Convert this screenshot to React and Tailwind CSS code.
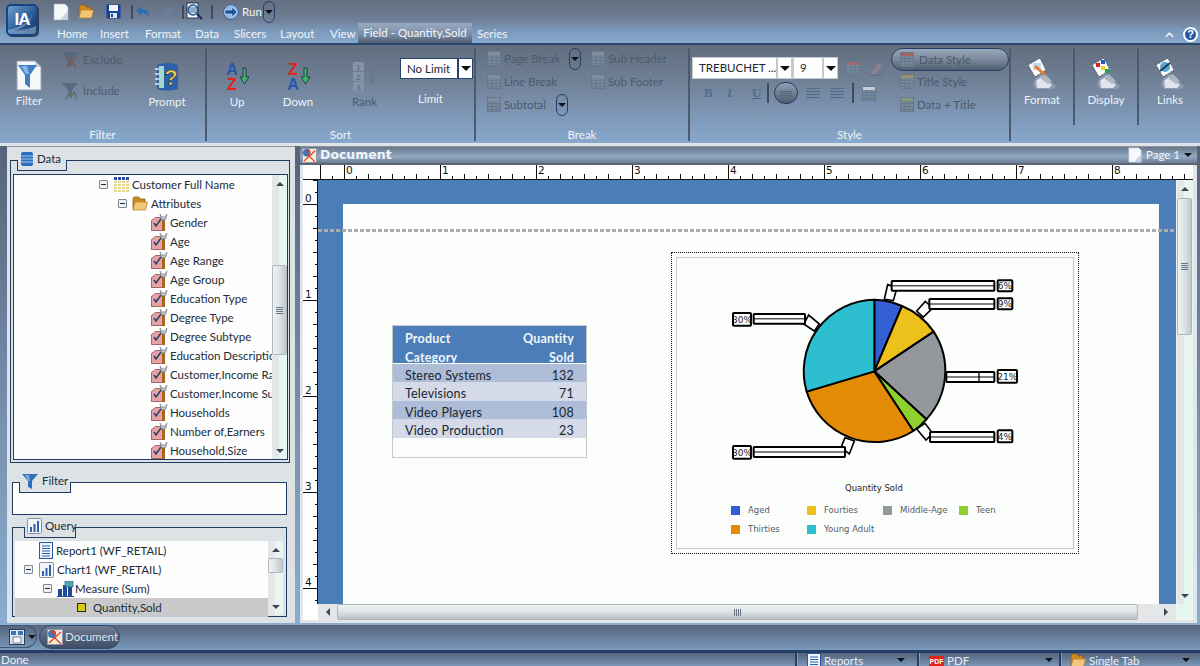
import React from "react";

// ---------- small icons ----------
const PageIcon = ({ className = "" }) => (
  <svg viewBox="0 0 16 18" className={`w-[16px] h-[18px] shrink-0 ${className}`}>
    <path d="M1 1h11l3 3v13H1z" fill="#f6f8fb" stroke="#a4afbd" strokeWidth="0.6" />
    <path d="M7 17l8-9v9z" fill="#c3d1e4" />
  </svg>
);

const FolderIcon = ({ w = 16, h = 15 }) => (
  <svg viewBox="0 0 16 15" width={w} height={h} className="shrink-0">
    <path d="M1 3l1-2h5l1 2h5v10H1z" fill="#d08a22" stroke="#8a5510" strokeWidth="0.7" />
    <path d="M1 14l2-8h12.500l-2 8z" fill="#f4c678" stroke="#b27a22" strokeWidth="0.7" />
  </svg>
);

const SaveIcon = () => (
  <svg viewBox="0 0 15 15" className="w-[15px] h-[15px] shrink-0">
    <rect x="0.500" y="0.500" width="14" height="14" rx="1" fill="#14439a" />
    <rect x="3" y="1" width="9" height="6" fill="#f4f6fa" />
    <rect x="4" y="9" width="7" height="5" fill="#dfe6f0" />
    <rect x="5" y="10" width="2" height="3" fill="#14439a" />
  </svg>
);

const UndoIcon = ({ flip, color = "#2c6eb3" }) => (
  <svg viewBox="0 0 14 12" className={`w-[14px] h-[12px] shrink-0 ${flip ? "-scale-x-100" : ""}`}>
    <path d="M5 0v3c5 0 8 2 8 8-2-3-4-4-8-4v3L0 5z" fill={color} />
  </svg>
);

const PreviewIcon = () => (
  <svg viewBox="0 0 17 19" className="w-[17px] h-[19px] shrink-0">
    <rect x="1" y="1" width="11" height="15" fill="#fff" stroke="#26364d" />
    <circle cx="7" cy="8" r="5" fill="#d5ecf5" stroke="#1d4f8c" strokeWidth="1.400" />
    <path d="M3 6h8M3 8h8M3 10h8" stroke="#244c80" strokeWidth="0.800" />
    <path d="M11 12l5 5" stroke="#1f2d63" strokeWidth="2.200" />
  </svg>
);

const RunIcon = () => (
  <svg viewBox="0 0 16 16" className="w-[16px] h-[16px] shrink-0">
    <circle cx="8" cy="8" r="7.500" fill="#8eb6e3" stroke="#42628d" />
    <path d="M2 6h7V3l5 5-5 5v-3H2z" fill="#1d4f9c" stroke="#d7e5f5" strokeWidth="0.600" />
  </svg>
);

const Caret = ({ className = "" }) => (
  <span className={`block w-0 h-0 border-x-[4px] border-x-transparent border-t-[4px] border-t-[#0d1015] ${className}`} />
);

const BigCaret = () => (
  <span className="block w-0 h-0 border-x-[5px] border-x-transparent border-t-[5px] border-t-[#0d1015]" />
);

const FunnelPageIcon = () => (
  <svg viewBox="0 0 26 31" className="w-[26px] h-[31px]">
    <path d="M1 1h18l6 6v23H1z" fill="#f5f7f9" stroke="#9aa6b5" />
    <path d="M19 1v6h6z" fill="#c9d2dc" />
    <path d="M2 5h19l-7 10v13l-5-4V15z" fill="#3f7ec4" />
    <path d="M5 6h6l2 8h-3z" fill="#8ab6e6" />
  </svg>
);

const FunnelSmall = () => (
  <svg viewBox="0 0 17 17" className="w-[17px] h-[17px] shrink-0">
    <path d="M0 1h16l-6 7v8l-4-2V8z" fill="#2f70b8" />
    <path d="M3 2h4l1 6H6z" fill="#79a9dd" />
  </svg>
);

const ExcludeIcon = ({ include }) => (
  <svg viewBox="0 0 20 18" className="w-[20px] h-[18px] shrink-0">
    <path d="M2 1h16l-6 7v8l-4-2V8z" fill="#566a80" />
    {include ? (
      <path d="M5 17l4-5 2 3 3-5 3 7" stroke="#5c7565" strokeWidth="1.500" fill="none" />
    ) : (
      <path d="M5 5l11 11M16 6L6 16" stroke="#7a5a64" strokeWidth="2" fill="none" />
    )}
  </svg>
);

const PromptIcon = () => (
  <svg viewBox="0 0 26 30" className="w-[26px] h-[30px]">
    <path d="M3 3q10-4 21 0v24q-10 3-21 0z" fill="#2d60aa" />
    <rect x="5" y="4" width="5" height="22" fill="#a5d6cc" />
    <path d="M1 7h4M1 12h4M1 17h4M1 22h4" stroke="#dfe7ef" strokeWidth="1.300" />
    <text x="17" y="23" textAnchor="middle" fontSize="22" fontWeight="700" fontFamily="Liberation Sans" fill="#efd547" stroke="#20304a" strokeWidth="0.600">?</text>
  </svg>
);

const SortIcon = ({ top, bottom, topColor, bottomColor }) => (
  <svg viewBox="0 0 28 33" className="w-[28px] h-[33px]">
    <text x="9" y="14" textAnchor="middle" fontSize="16" fontWeight="700" fontFamily="Liberation Sans" fill={topColor}>{top}</text>
    <text x="9" y="29" textAnchor="middle" fontSize="16" fontWeight="700" fontFamily="Liberation Sans" fill={bottomColor}>{bottom}</text>
    <path d="M20 7h3v9h3l-4.500 7-4.500-7h3z" fill="#3fb56b" stroke="#15293c" strokeWidth="0.800" />
  </svg>
);

const RankIcon = () => (
  <svg viewBox="0 0 26 31" className="w-[26px] h-[31px]">
    {["1", "2", "3"].map((n, i) => (
      <g key={n}>
        <rect x="1" y={1 + i * 10} width="11" height="9" fill="#8494a6" />
        <text x="6.500" y={8.500 + i * 10} textAnchor="middle" fontSize="8" fontFamily="Liberation Sans" fill="#566476">{n}</text>
      </g>
    ))}
    <path d="M18 8h3v8h3l-4.500 7-4.500-7h3z" fill="#67788b" />
  </svg>
);

const SmallTableIcon = ({ head = "#7f8ea0", line = "#66788c" }) => (
  <svg viewBox="0 0 14 15" className="w-[14px] h-[15px] shrink-0">
    <rect x="0.500" y="0.500" width="13" height="14" fill="#77889b" stroke={line} />
    <rect x="1" y="1" width="12" height="3" fill={head} />
    <path d="M1 6.500h12M1 9.500h12M1 12.500h12M5 4v10M9 4v10" stroke={line} />
  </svg>
);

// tilted card over a curled grey sheet
const CardIcon = ({ children }) => (
  <svg viewBox="0 0 32 34" className="w-[32px] h-[34px]">
    <path d="M9 22l7-6 14 13-3 3H10l-3-4z" fill="#8d9cae" />
    <path d="M10 24l6-5 10 9-3 3H11z" fill="#dfe5ec" />
    <path d="M14 21l5-4 7 7-4 3z" fill="#aab6c3" />
    <path d="M2 8l12-7 6 12-11 7z" fill="#f8fafc" stroke="#26364d" strokeWidth="0.700" strokeDasharray="2 1" />
    {children}
  </svg>
);

const FieldIcon = () => (
  <svg viewBox="0 0 17 17" className="w-[17px] h-[17px] shrink-0">
    <path d="M0.500 6.500l4-3h9v10l-3 3H0.500z" fill="#e6a2a6" stroke="#8d4c50" strokeWidth="0.800" />
    <path d="M3 9l2 3 5-7" stroke="#27405f" strokeWidth="1.500" fill="none" />
    <rect x="11" y="6" width="3" height="11" fill="#a9651f" />
    <path d="M9 0l1 5 2 1h2l1-1 1-5-2 3h-3z" fill="#bfc4ca" stroke="#56606b" strokeWidth="0.500" />
  </svg>
);

const GridIcon = () => (
  <svg viewBox="0 0 16 16" className="w-[16px] h-[16px] shrink-0">
    {[0, 4, 8, 12].map((x) => <rect key={x} x={x} y="0" width="3" height="3" fill="#2a4f9e" />)}
    {[4, 7, 10, 13].map((y) =>
      [0, 4, 8, 12].map((x) => <rect key={`${x}-${y}`} x={x} y={y} width="3" height="2" fill="#e5d690" />)
    )}
  </svg>
);

const MinusBox = () => (
  <span className="flex w-[9px] h-[9px] shrink-0 items-center justify-center border border-[#7d8794] bg-[#eef1f4] rounded-[1px]">
    <span className="block w-[5px] h-px bg-[#1c2a3a]" />
  </span>
);

const DocIcon = () => (
  <svg viewBox="0 0 14 17" className="w-[14px] h-[17px] shrink-0">
    <rect x="0.500" y="0.500" width="13" height="16" fill="#eef3fa" stroke="#29569e" />
    <path d="M3 4h8M3 6.500h8M3 9h8M3 11.500h8M3 14h8" stroke="#2a62b0" />
  </svg>
);

const ChartIcon = () => (
  <svg viewBox="0 0 15 16" className="w-[15px] h-[16px] shrink-0">
    <rect x="0.500" y="0.500" width="14" height="15" rx="1" fill="#f2f4f7" stroke="#8793a3" />
    <rect x="3" y="9" width="2" height="5" fill="#2f62ad" />
    <rect x="6.500" y="6" width="2" height="8" fill="#2f62ad" />
    <rect x="10" y="3" width="2" height="11" fill="#2f62ad" />
  </svg>
);

const MeasureIcon = () => (
  <svg viewBox="0 0 17 16" className="w-[17px] h-[16px] shrink-0">
    <rect x="1" y="8" width="4" height="7" fill="#1f4b96" />
    <rect x="6" y="4" width="4" height="11" fill="#1f4b96" />
    <rect x="11" y="6" width="4" height="9" fill="#1f4b96" />
    <rect x="8" y="0" width="8" height="6" fill="#4fa8a5" stroke="#1f4b96" strokeWidth="0.600" />
    <path d="M0 15.500h17" stroke="#1f4b96" />
  </svg>
);

const DocTabIcon = ({ size = 16 }) => (
  <svg viewBox="0 0 16 16" width={size} height={size} className="shrink-0">
    <rect x="0.500" y="0.500" width="15" height="15" fill="#f7ecd4" stroke="#8a98aa" />
    <circle cx="5" cy="5" r="4" fill="#3b77bb" />
    <path d="M5 1a4 4 0 0 1 4 4H5z" fill="#dd3b2e" />
    <path d="M2 14L14 3M6 7l8 8" stroke="#d83c2c" strokeWidth="1.300" />
  </svg>
);

// ---------- shared bits ----------
const ScrollV = ({ top, thumb, bottom }) => (
  <div className="flex flex-col w-[15px] h-full shrink-0 bg-[linear-gradient(90deg,#e4e6e8_50%,#e8f6f2_50%)]">
    <div className="flex h-[17px] shrink-0 items-center justify-center">
      <span className="block w-0 h-0 border-x-[4px] border-x-transparent border-b-[4px] border-b-[#3c4652]" />
    </div>
    <div style={{ height: top }} className="shrink-0" />
    <div style={{ height: thumb }} className="flex shrink-0 items-center justify-center rounded-[2px] border border-[#aeb6be] bg-[linear-gradient(90deg,#eef4f3,#dfe4e6_45%,#c2c7d0)]">
      {thumb > 30 && (
        <span className="flex flex-col gap-px w-[7px]">
          <span className="h-px bg-[#6a7480]" />
          <span className="h-px bg-[#6a7480]" />
          <span className="h-px bg-[#6a7480]" />
          <span className="h-px bg-[#6a7480]" />
        </span>
      )}
    </div>
    <div className="flex-1" />
    <div style={{ height: bottom }} className="flex shrink-0 items-center justify-center">
      <span className="block w-0 h-0 border-x-[4px] border-x-transparent border-t-[4px] border-t-[#3c4652]" />
    </div>
  </div>
);

// the tab sits over the fieldset's top line, only its lower part has a border
const Legend = ({ icon, text, className }) => (
  <div className={`relative flex items-start gap-[3px] bg-[#dde2e5] pl-[3px] ${className}`}>
    <span className="absolute inset-x-0 bottom-0 h-[11px] border-x border-b border-[#1f3b63]" />
    <span className="relative">{icon}</span>
    <span className="relative text-[11.500px] leading-[16px] text-[#1c2a3a]">{text}</span>
  </div>
);

const TreeRow = ({ indent, minus, icon, text, selected, gap = "gap-[3px]" }) => (
  <div className={`flex items-center h-[19px] shrink-0 ${gap} ${selected ? "bg-[#c9c9c9]" : ""} ${indent}`}>
    {minus && <MinusBox />}
    {icon}
    <span className="text-[11.500px] whitespace-nowrap text-[#1c2a3a]">{text}</span>
  </div>
);

const ribbonTextOn = "text-[11.500px] text-[#eef3f8] leading-[16px] whitespace-nowrap";
const ribbonTextOff = "text-[11.500px] text-[#4c5a6c] leading-[16px] whitespace-nowrap";

const BigBtn = ({ icon, label, className = "", off, pt = "pt-[14px]", labelH = "h-[42px]" }) => (
  <div className={`flex flex-col items-center shrink-0 ${pt} ${className}`}>
    <div className={`flex items-start justify-center ${labelH}`}>{icon}</div>
    <span className={off ? ribbonTextOff : ribbonTextOn}>{label}</span>
  </div>
);

const SmallBtn = ({ icon, label, w = "" }) => (
  <div className={`flex items-center gap-[3px] h-[23px] ${w}`}>
    {icon}
    <span className={ribbonTextOff}>{label}</span>
  </div>
);

const PillCaret = ({ className = "" }) => (
  <span className={`flex w-[12px] h-[22px] items-center justify-center rounded-full border border-[#233f68] ${className}`}>
    <Caret />
  </span>
);

const GroupLabel = ({ children }) => (
  <div className="h-[14px] text-center text-[11.500px] leading-[15px] text-[#eef3f8]">{children}</div>
);

const Combo = ({ text, w }) => (
  <div className={`flex h-[20px] items-center bg-[#fdfefd] ${w}`}>
    <span className="flex-1 pl-[6px] text-[11.500px] text-[#1b2430] whitespace-nowrap overflow-hidden">{text}</span>
    <span className="flex w-[15px] h-full items-center justify-center bg-white border-l-2 border-[#c5c9cd]">
      <BigCaret />
    </span>
  </div>
);

// ---------- rulers ----------
const HRuler = () => {
  const ticks = [];
  for (let i = 0; i < 73; i++) ticks.push(i * 12);
  return (
    <svg width="873" height="15" className="block shrink-0">
      {ticks.map((x, i) => {
        const major = (i - 2) % 8 === 0;
        const mid = i % 2 === 0;
        return <line key={x} x1={x + 0.500} x2={x + 0.500} y1={major || i === 0 ? 0 : mid ? 9 : 11} y2="14" stroke="#111" />;
      })}
      {[0, 1, 2, 3, 4, 5, 6, 7, 8].map((n) => (
        <text key={n} x={26 + n * 96} y="9" fontSize="10.500" fontFamily="DejaVu Sans" fill="#111">{n}</text>
      ))}
      <line x1="0" x2="873" y1="14.500" y2="14.500" stroke="#111" />
    </svg>
  );
};

const VRuler = () => {
  const ticks = [];
  for (let i = 0; i < 37; i++) ticks.push(i * 12);
  return (
    <svg width="15" height="439" className="block shrink-0">
      {ticks.map((y, i) => {
        const major = (i - 2) % 8 === 0;
        const mid = i % 2 === 0;
        return <line key={y} y1={y} y2={y} x1={major ? 0 : mid ? 10 : 12} x2="15" stroke="#111" transform="translate(0 0.500)" />;
      })}
      {[0, 1, 2, 3, 4].map((n) => (
        <text key={n} x="2" y={22 + n * 96} fontSize="10.500" fontFamily="DejaVu Sans" fill="#111">{n}</text>
      ))}
      <line x1="14.500" x2="14.500" y1="0" y2="439" stroke="#111" />
    </svg>
  );
};

// ---------- chart ----------
const PieLabel = ({ x, y, w, h, text }) => (
  <g>
    <rect x={x} y={y} width={w} height={h} rx="3" fill="#fff" stroke="#000" strokeWidth="6" />
    <text x={x + w / 2} y={y + h / 2 + 10} textAnchor="middle" fontSize="27" fontFamily="DejaVu Sans" fill="#222">{text}</text>
  </g>
);

const Bar = ({ x, y, w, h }) => (
  <g>
    <rect x={x} y={y} width={w} height={h} rx="2" fill="#fff" stroke="#000" strokeWidth="6" />
    <line x1={x} x2={x + w} y1={y + h / 2} y2={y + h / 2} stroke="#000" strokeWidth="3" />
  </g>
);

const PieChart = () => {
  const cx = 610;
  const cy = 364;
  const r = 215;
  const slices = [
    ["#345fd2", [610, 149], [693, 168]],
    ["#ecc11c", [693, 168], [788, 245]],
    ["#94979c", [788, 245], [766, 508]],
    ["#8fd12c", [766, 508], [727, 543]],
    ["#e48b05", [727, 543], [407, 425]],
    ["#2dbfd0", [407, 425], [610, 149]],
  ];
  return (
    <svg viewBox="0 0 1023 915" width="341" height="305" className="absolute left-[-6px] top-[-8px] overflow-visible">
      {[
        "640,148 650,104 678,113 667,152",
        "737,183 763,154 785,174 757,201",
        "737,537 762,520 785,550 765,570",
        "510,592 522,563 550,573 535,612",
        "398,222 413,195 445,222 430,243",
      ].map((p) => (
        <polygon key={p} points={p} fill="#fff" stroke="#000" strokeWidth="5" />
      ))}
      <Bar x={662} y={93} w={308} h={29} />
      <Bar x={775} y={147} w={195} h={30} />
      <Bar x={826} y={366} w={144} h={30} />
      <line x1="924" x2="924" y1="366" y2="396" stroke="#000" strokeWidth="4" />
      <Bar x={777} y={546} w={193} h={30} />
      <Bar x={248} y={591} w={274} h={30} />
      <Bar x={248} y={192} w={154} h={29} />
      {slices.map(([fill, a, b]) => (
        <path
          key={fill}
          d={`M${cx} ${cy}L${a[0]} ${a[1]}A${r} ${r} 0 0 1 ${b[0]} ${b[1]}Z`}
          fill={fill}
          stroke="#000"
          strokeWidth="6"
          strokeLinejoin="round"
        />
      ))}
      <PieLabel x={980} y={91} w={44} h={33} text="6%" />
      <PieLabel x={980} y={145} w={44} h={33} text="9%" />
      <PieLabel x={980} y={360} w={58} h={38} text="21%" />
      <PieLabel x={980} y={541} w={44} h={36} text="4%" />
      <PieLabel x={186} y={588} w={54} h={38} text="30%" />
      <PieLabel x={186} y={189} w={54} h={38} text="30%" />
    </svg>
  );
};

const legend = [
  ["#345fd2", "Aged"],
  ["#ecc11c", "Fourties"],
  ["#94979c", "Middle-Age"],
  ["#8fd12c", "Teen"],
  ["#e48b05", "Thirties"],
  ["#2dbfd0", "Young Adult"],
];

const rows = [
  ["Stereo Systems", "132", "bg-[#adbdd8]", "h-[18px]"],
  ["Televisions", "71", "bg-[#d4dae8]", "h-[19px]"],
  ["Video Players", "108", "bg-[#adbdd8]", "h-[18px]"],
  ["Video Production", "23", "bg-[#d4dae8]", "h-[19px]"],
];

const fields = [
  "Gender", "Age", "Age Range", "Age Group", "Education Type", "Degree Type", "Degree Subtype",
  "Education Description", "Customer,Income Range", "Customer,Income Subrange", "Households",
  "Number of,Earners", "Household,Size",
];

const tabs = [
  ["Home", "w-[43px]"],
  ["Insert", "w-[45px]"],
  ["Format", "w-[50px]"],
  ["Data", "w-[39px]"],
  ["Slicers", "w-[46px]"],
  ["Layout", "w-[50px]"],
  ["View", "w-[28px]"],
];

const StatusMenu = ({ icon, label, w, arrow }) => (
  <div className={`flex items-start h-full border-l-2 border-[#233f68] shadow-[inset_1px_0_0_#8aa0bb] ${w}`}>
    <div className={`flex items-start gap-[3px] ${arrow.pl}`}>
      {icon}
      <span className="text-[11.500px] leading-[15px] text-[#e7eef6] whitespace-nowrap">{label}</span>
    </div>
    <Caret className={`mt-[5px] ml-auto ${arrow.pr}`} />
  </div>
);

export default function App() {
  return (
    <div className="flex flex-col w-[1200px] h-[666px] overflow-hidden font-['Lato',sans-serif] bg-[#6d84a0]">
      {/* title + tabs */}
      <header className="flex h-[45px] shrink-0 border-b-2 border-[#2a4870] bg-[linear-gradient(180deg,#646f81,#6f7f95_45%,#7b98ba_70%,#87a9cd)]">
        <div className="flex w-[44px] shrink-0 pl-[6px] pt-[4px]">
          <div className="relative flex w-[32px] h-[32px] overflow-hidden items-start justify-center pt-[5px] rounded-[5px] border-2 border-[#14457f] bg-[linear-gradient(135deg,#6f9ccb,#2c5d97_55%,#12345f)] shadow-[1px_1px_0_#2b3f58]">
            <svg viewBox="0 0 28 28" className="absolute inset-0 w-full h-full">
              <path d="M22 0c6 10-2 20-22 24v4h28V20C24 22 14 24 6 25 20 20 28 12 22 0z" fill="#a9c6e3" opacity="0.500" />
            </svg>
            <span className="relative font-['Liberation_Sans'] text-[17px] font-bold leading-none tracking-[-1px] text-white">IA</span>
          </div>
        </div>
        <div className="flex flex-col flex-1 min-w-0">
          <div className="flex h-[23px] shrink-0 items-center pl-[9px]">
            <PageIcon />
            <span className="ml-[9px]"><FolderIcon /></span>
            <span className="ml-[12px]"><SaveIcon /></span>
            <span className="ml-[10px] w-[2px] h-[14px] bg-[#3e4b5c]" />
            <span className="ml-[3px]"><UndoIcon /></span>
            <span className="ml-[10px]"><UndoIcon flip color="#66809c" /></span>
            <span className="ml-[8px] w-[2px] h-[14px] bg-[#3e4b5c]" />
            <span className="ml-[2px]"><PreviewIcon /></span>
            <span className="ml-[8px] w-[2px] h-[14px] bg-[#3e4b5c]" />
            <span className="ml-[10px]"><RunIcon /></span>
            <span className="ml-[3px] text-[11.500px] text-[#f1f5f9]">Run</span>
            <PillCaret className="ml-[1px] h-[18px]" />
          </div>
          <nav className="flex flex-1 items-end pl-[13px]">
            {tabs.map(([name, w]) => (
              <span key={name} className={`${w} h-[19px] text-[11.500px] leading-[19px] text-[#f0f4f8] whitespace-nowrap`}>{name}</span>
            ))}
            <span className="flex w-[114px] h-[20px] items-center justify-center text-[11.500px] text-[#f3f6fa] whitespace-nowrap bg-[linear-gradient(180deg,#98aac2,#7a8ca5_60%,#4f5c70)]">
              Field - Quantity,Sold
            </span>
            <span className="ml-[5px] h-[19px] text-[11.500px] leading-[19px] text-[#f0f4f8]">Series</span>
            <svg viewBox="0 0 10 6" className="ml-auto mb-[5px] w-[9px] h-[6px]">
              <path d="M1 5l4-4 4 4" stroke="#fff" strokeWidth="1.500" fill="none" />
            </svg>
            <span className="flex ml-[9px] mr-[2px] mb-[1px] w-[15px] h-[15px] items-center justify-center rounded-full border-2 border-white bg-[#2756a8] font-['Liberation_Sans'] text-[11px] font-bold text-white">?</span>
          </nav>
        </div>
      </header>

      {/* ribbon */}
      <section className="flex h-[98px] shrink-0 pt-[3px] bg-[linear-gradient(180deg,#626e7f,#6f7f94_35%,#7b93b0_65%,#87a9cd)]">
        <div className="flex flex-col w-[207px] h-[93px] shrink-0 border-r-2 border-[#4d5a6b]">
          <div className="flex h-[79px]">
            <BigBtn className="w-[58px]" pt="pt-[12px]" labelH="h-[33px]" icon={<FunnelPageIcon />} label="Filter" />
            <div className="flex flex-col w-[80px] gap-[8px] pl-[2px]">
              <SmallBtn icon={<ExcludeIcon />} label="Exclude" />
              <SmallBtn icon={<ExcludeIcon include />} label="Include" />
            </div>
            <BigBtn className="w-[58px]" pt="pt-[14px]" labelH="h-[32px]" icon={<PromptIcon />} label="Prompt" />
          </div>
          <GroupLabel>Filter</GroupLabel>
        </div>

        <div className="flex flex-col w-[269px] h-[93px] shrink-0 border-r-2 border-[#4d5a6b]">
          <div className="flex h-[79px]">
            <BigBtn className="w-[60px]" pt="pt-[13px]" labelH="h-[33px]" icon={<SortIcon top="A" bottom="Z" topColor="#2458ad" bottomColor="#ee1c1c" />} label="Up" />
            <BigBtn className="w-[62px]" pt="pt-[13px]" labelH="h-[33px]" icon={<SortIcon top="Z" bottom="A" topColor="#ee1c1c" bottomColor="#2458ad" />} label="Down" />
            <BigBtn className="w-[71px]" pt="pt-[13px]" labelH="h-[33px]" off icon={<RankIcon />} label="Rank" />
            <div className="flex flex-col items-center w-[73px] pt-[10px]">
              <div className="flex w-[73px] h-[21px] items-center bg-white border border-[#27456f]">
                <span className="flex-1 pl-[6px] text-[11.500px] text-[#1b2430]">No Limit</span>
                <span className="flex w-[15px] h-full items-center justify-center border-l-2 border-[#27456f]"><BigCaret /></span>
              </div>
              <span className={`mt-[12px] pr-[12px] ${ribbonTextOn}`}>Limit</span>
            </div>
          </div>
          <GroupLabel>Sort</GroupLabel>
        </div>

        <div className="flex flex-col w-[214px] h-[93px] shrink-0 border-r-2 border-[#4d5a6b]">
          <div className="grid h-[79px] grid-cols-[104px_1fr] pl-[11px] content-start -translate-y-px">
            <div className="flex items-center">
              <SmallBtn w="w-[82px]" icon={<SmallTableIcon />} label="Page Break" />
              <PillCaret />
            </div>
            <SmallBtn icon={<SmallTableIcon />} label="Sub Header" />
            <SmallBtn icon={<SmallTableIcon />} label="Line Break" />
            <SmallBtn icon={<SmallTableIcon />} label="Sub Footer" />
            <div className="flex items-center">
              <SmallBtn w="w-[69px]" icon={<SmallTableIcon />} label="Subtotal" />
              <PillCaret />
            </div>
          </div>
          <GroupLabel>Break</GroupLabel>
        </div>

        <div className="flex flex-col w-[321px] h-[93px] shrink-0 border-r-2 border-[#4d5a6b]">
          <div className="flex h-[79px]">
            <div className="flex flex-col w-[201px] pl-[2px] pt-[9px]">
              <div className="flex items-center">
                <div className="flex gap-[3px] w-[146px] p-[1px] bg-[#c5c9cd]">
                  <Combo text="TREBUCHET ..." w="w-[98px]" />
                  <Combo text="9" w="w-[43px]" />
                </div>
                <span className="ml-[8px]"><SmallTableIcon head="#9c6b70" /></span>
                <svg viewBox="0 0 16 16" className="ml-[9px] w-[15px] h-[15px]">
                  <path d="M2 12l8-10 4 3-7 9H2z" fill="#8c7f88" />
                  <path d="M1 15h14" stroke="#5b6a7c" />
                </svg>
              </div>
              <div className="flex items-center h-[22px] mt-[3px] pl-[12px]">
                <span className="w-[23px] font-['Liberation_Serif'] text-[13px] font-bold text-[#50698d]">B</span>
                <span className="w-[25px] font-['Liberation_Serif'] text-[13px] font-bold italic text-[#50698d]">I</span>
                <span className="w-[15px] font-['Liberation_Serif'] text-[13px] font-bold underline text-[#50698d]">U</span>
                <span className="w-[2px] h-[20px] bg-[#3e4b5c]" />
                <span className="flex ml-[5px] w-[24px] h-[22px] flex-col items-center justify-center gap-px rounded-[11px] border border-[#233f68] bg-[linear-gradient(180deg,#8fa0b4,#4f5d70)]">
                  <span className="w-[12px] h-px bg-[#53647a]" />
                  <span className="w-[12px] h-px bg-[#53647a]" />
                  <span className="w-[12px] h-px bg-[#53647a]" />
                </span>
                {[0, 1].map((k) => (
                  <span key={k} className="flex ml-[5px] w-[19px] flex-col items-center gap-[2px]">
                    <span className="w-[14px] h-px bg-[#50698d]" />
                    <span className="w-[14px] h-px bg-[#50698d]" />
                    <span className="w-[14px] h-px bg-[#50698d]" />
                    <span className="w-[14px] h-px bg-[#50698d]" />
                  </span>
                ))}
                <span className="ml-[6px] w-[2px] h-[20px] bg-[#3e4b5c]" />
                <span className="ml-[8px]"><SmallTableIcon head="#c4ccd5" /></span>
              </div>
            </div>
            <div className="flex flex-col w-[118px]">
              <div className="flex items-center gap-[5px] h-[23px] pl-[8px] rounded-full border border-[#233f68] bg-[linear-gradient(180deg,#98a8bc,#7a899c_50%,#4f5d71)]">
                <SmallTableIcon head="#a4655e" />
                <span className={ribbonTextOff}>Data Style</span>
              </div>
              <div className="pl-[9px] -mt-px">
                <SmallBtn icon={<SmallTableIcon head="#9c8f6e" />} label="Title Style" />
                <SmallBtn icon={<SmallTableIcon head="#7e9c7d" />} label="Data + Title" />
              </div>
            </div>
          </div>
          <GroupLabel>Style</GroupLabel>
        </div>

        <div className="flex w-[64px] h-[77px] shrink-0 justify-center border-r-2 border-[#4d5a6b]">
          <BigBtn pt="pt-[9px]" labelH="h-[35px]" label="Format" icon={
            <CardIcon>
              <rect x="7" y="6" width="8" height="7" fill="#bcd9f2" />
              <path d="M9 9l10 9" stroke="#e8792a" strokeWidth="3" />
            </CardIcon>
          } />
        </div>
        <div className="flex w-[64px] h-[77px] shrink-0 justify-center border-r-2 border-[#4d5a6b]">
          <BigBtn pt="pt-[9px]" labelH="h-[35px]" label="Display" icon={
            <CardIcon>
              <rect x="6" y="6" width="4" height="4" fill="#d8261c" />
              <rect x="11" y="3" width="4" height="4" fill="#2a55c4" />
              <rect x="11" y="9" width="4" height="4" fill="#f2d21a" />
              <rect x="15" y="12" width="4" height="4" fill="#1fa93c" />
            </CardIcon>
          } />
        </div>
        <div className="flex w-[62px] h-[77px] shrink-0 justify-center">
          <BigBtn pt="pt-[9px]" labelH="h-[35px]" label="Links" icon={
            <CardIcon>
              <circle cx="11" cy="10" r="5" fill="#5aa6cf" />
              <path d="M6 14l10-8" stroke="#1f3a60" strokeWidth="2" />
            </CardIcon>
          } />
        </div>
      </section>

      <div className="h-[3px] shrink-0 bg-[#dfe3e6]" />

      {/* main */}
      <main className="flex h-[479px] shrink-0 bg-[linear-gradient(180deg,#56637a,#7a93b0_60%,#8aaccf)]">
        {/* left panel */}
        <aside className="flex flex-col ml-[7px] w-[288px] h-[477px] shrink-0 bg-[#dde2e5] border-t border-[#8a939e]">
          <div className="mt-[13px] ml-[3px] w-[280px] h-[303px] border border-[#1f3b63]">
            <Legend className="ml-[6px] -mt-[10px] h-[20px] w-[50px]" icon={<svg viewBox="0 0 14 16" className="w-[14px] h-[16px] shrink-0"><rect x="1" y="1" width="12" height="14" rx="2" fill="#2c6cc0" /><path d="M1 5h12M1 8h12M1 11h12" stroke="#a8cdf0" /></svg>} text="Data" />
            <div className="flex mt-[3px] ml-[2px] w-[275px] h-[286px] border border-[#1f3b63] bg-[#fdfefd]">
              <div className="flex flex-col flex-1 min-w-0 overflow-hidden">
                <TreeRow indent="pl-[85px]" gap="gap-[6px]" minus icon={<span className="-mr-[4px]"><GridIcon /></span>} text="Customer Full Name" />
                <TreeRow indent="pl-[104px]" gap="gap-[5px]" minus icon={<span className="-mr-[2px]"><FolderIcon w={16} h={15} /></span>} text="Attributes" />
                {fields.map((f) => (
                  <TreeRow key={f} indent="pl-[137px]" gap="gap-[2px]" icon={<FieldIcon />} text={f} />
                ))}
              </div>
              <ScrollV top={73} thumb={90} bottom={17} />
            </div>
          </div>

          <div className="mt-[19px] ml-[5px] w-[275px] h-[33px] border border-[#1f3b63] bg-[#fdfefd]">
            <Legend className="ml-[6px] -mt-[10px] w-[52px] h-[20px]" icon={<FunnelSmall />} text="Filter" />
          </div>

          <div className="mt-[12px] ml-[5px] w-[275px] h-[90px] border border-[#1f3b63]">
            <Legend className="ml-[11px] -mt-[10px] w-[52px] h-[20px] -mb-[2px]" icon={<ChartIcon />} text="Query" />
            <div className="flex mt-[5px] ml-[2px] w-[268px] h-[74px] bg-[#fdfefd]">
              <div className="flex flex-col flex-1 min-w-0">
                <TreeRow indent="pl-[24px]" icon={<DocIcon />} text="Report1 (WF_RETAIL)" />
                <TreeRow indent="pl-[9px]" gap="gap-[6px]" minus icon={<span className="-mr-[3px]"><ChartIcon /></span>} text="Chart1 (WF_RETAIL)" />
                <TreeRow indent="pl-[28px]" gap="gap-[5px]" minus icon={<span className="-mr-[4px]"><MeasureIcon /></span>} text="Measure (Sum)" />
                <TreeRow
                  indent="pl-[62px]"
                  gap="gap-[7px]"
                  selected
                  icon={<span className="block w-[9px] h-[9px] border border-[#2a2a10] bg-[#d8c91a]" />}
                  text="Quantity,Sold"
                />
              </div>
              <ScrollV top={0} thumb={15} bottom={17} />
            </div>
          </div>
        </aside>

        {/* document panel */}
        <section className="flex flex-col ml-[5px] w-[897px] h-[477px] shrink-0 bg-[#e2e6e9] border-t border-[#8a939e]">
          <div className="flex h-[18px] shrink-0 items-center bg-[linear-gradient(180deg,#6a7789,#93a9c3_60%,#6c7d92)] border-b-2 border-[#5a6676]">
            <span className="ml-[2px]"><DocTabIcon size={15} /></span>
            <span className="ml-[3px] font-['DejaVu_Sans'] text-[12.500px] font-bold text-[#f1f5f9]">Document</span>
            <span className="ml-auto"><PageIcon className="scale-90" /></span>
            <span className="ml-[3px] text-[11.500px] text-[#f1f5f9]">Page 1</span>
            <Caret className="ml-[4px] mr-[5px]" />
          </div>
          <div className="flex flex-col mx-[3px] w-[890px] bg-white">
            <div className="flex h-[15px] shrink-0">
              <div className="w-[17px] h-[15px] border-b border-[#111] bg-white" />
              <HRuler />
            </div>
            <div className="flex h-[424px]">
              <div className="h-[424px] w-[15px] overflow-hidden"><VRuler /></div>
              <div className="flex flex-col w-[875px]">
                <div className="flex h-[424px]">
                  <div className="relative flex-1 h-[424px] overflow-hidden bg-[#4b7eb8] pt-[24px] pl-[25px] pr-[17px]">
                    <div className="relative h-[400px] bg-[#fcfefc]">
                      {/* report table */}
                      <div className="absolute left-[49px] top-[121px] w-[195px] h-[133px] border border-[#c5c8cc] bg-[#fcfefc] text-[12.500px] tracking-[0.2px]">
                        <div className="grid h-[37px] grid-cols-[1fr_auto] px-[12px] pt-[3px] overflow-hidden bg-[#4b7eb8] font-bold leading-[19px] text-[#f1f5fa]">
                          <span>Product</span>
                          <span className="text-right">Quantity</span>
                          <span>Category</span>
                          <span className="text-right">Sold</span>
                        </div>
                        <div className="h-px bg-white" />
                        {rows.map(([name, qty, bg, h]) => (
                          <div key={name} className={`flex justify-between px-[12px] overflow-hidden leading-[24px] text-[#1c2430] ${bg} ${h}`}>
                            <span>{name}</span>
                            <span>{qty}</span>
                          </div>
                        ))}
                      </div>
                      {/* chart */}
                      <div className="absolute left-[328px] top-[48px] w-[408px] h-[302px] border border-dotted border-[#111] p-[4px]">
                        <div className="relative w-[398px] h-[292px] border border-[#c5c8cc] pt-[224px]">
                          <PieChart />
                          <div className="relative pl-[168px] font-['DejaVu_Sans'] text-[8.500px] leading-[12px] text-[#222]">Quantity Sold</div>
                          <div className="relative grid grid-cols-[76px_76px_76px_76px] gap-y-[7px] mt-[10px] pl-[54px]">
                            {legend.map(([c, name]) => (
                              <div key={name} className="flex items-center gap-[8px] h-[12px]">
                                <span style={{ background: c }} className="block w-[9px] h-[9px] shrink-0" />
                                <span className="font-['DejaVu_Sans'] text-[8.500px] text-[#555b68] whitespace-nowrap">{name}</span>
                              </div>
                            ))}
                          </div>
                        </div>
                      </div>
                    </div>
                    {/* margin guide */}
                    <div className="absolute left-0 right-0 top-[49px] h-[3px] bg-[repeating-linear-gradient(90deg,#a9acaf_0_4px,transparent_4px_6px)]" />
                  </div>
                  <div className="flex w-[17px] pl-[1px] h-[424px] bg-[#e8f6f2]">
                    <ScrollV top={1} thumb={137} bottom={17} />
                  </div>
                </div>
              </div>
            </div>
            <div className="flex h-[16px] ml-[15px] bg-[#e4e6e8]">
              <div className="flex w-[19px] items-center justify-center">
                <span className="block w-0 h-0 border-y-[4px] border-y-transparent border-r-[4px] border-r-[#3c4652]" />
              </div>
              <div className="flex w-[801px] items-center justify-center rounded-[2px] border border-[#aeb6be] bg-[linear-gradient(180deg,#eef4f3,#dfe4e6_45%,#bcc1c8)]">
                <span className="flex gap-px h-[7px]">
                  <span className="w-px bg-[#6a7480]" />
                  <span className="w-px bg-[#6a7480]" />
                  <span className="w-px bg-[#6a7480]" />
                  <span className="w-px bg-[#6a7480]" />
                </span>
              </div>
              <div className="flex w-[38px] items-center justify-end pr-[8px]">
                <span className="block w-0 h-0 border-y-[4px] border-y-transparent border-l-[4px] border-l-[#3c4652]" />
              </div>
              <div className="flex-1 bg-[#e8f6f2]" />
            </div>
          </div>
        </section>
      </main>

      {/* window tabs */}
      <div className="flex h-[28px] shrink-0 items-start border-b-[3px] border-[#233f68] bg-[linear-gradient(180deg,#55637a,#7b9abd)]">
        <div className="flex w-[37px] h-[23px] items-center pl-[9px] gap-[3px] rounded-r-full border border-l-0 border-[#3d5676]">
          <svg viewBox="0 0 16 16" className="w-[16px] h-[16px]">
            <rect x="0.500" y="0.500" width="15" height="15" fill="#dfe6ef" stroke="#26415f" />
            <rect x="2" y="2" width="5" height="4" fill="#3d76b8" />
            <rect x="9" y="2" width="5" height="4" fill="#3d76b8" />
            <rect x="4" y="8" width="8" height="6" fill="#f5f7fa" stroke="#26415f" strokeWidth="0.600" />
          </svg>
          <Caret />
        </div>
        <div className="flex ml-[2px] w-[81px] h-[24px] items-center gap-[2px] pl-[7px] rounded-full border border-[#2f4a70] bg-[linear-gradient(180deg,#6e7d92,#4c5a72_70%,#3f4e68)]">
          <DocTabIcon />
          <span className="text-[11.500px] text-[#dfe6ef]">Document</span>
        </div>
      </div>

      {/* status bar */}
      <footer className="flex h-[13px] shrink-0 overflow-hidden bg-[linear-gradient(180deg,#56647a,#7995b6)]">
        <span className="flex-1 pl-px text-[11.500px] leading-[14px] text-[#e7eef6]">Done</span>
        <StatusMenu w="w-[122px]" icon={<DocIcon />} label="Reports" arrow={{ pl: "pl-[10px]", pr: "mr-[12px]" }} />
        <StatusMenu
          w="w-[142px]"
          icon={
            <span className="flex w-[15px] h-[12px] mt-[3px] items-center justify-center bg-[#e2231a] font-['Liberation_Sans'] text-[7px] font-bold text-white">PDF</span>
          }
          label="PDF"
          arrow={{ pl: "pl-[10px]", pr: "mr-[6px]" }}
        />
        <StatusMenu w="w-[141px]" icon={<FolderIcon />} label="Single Tab" arrow={{ pl: "pl-[9px]", pr: "mr-[10px]" }} />
      </footer>
    </div>
  );
}
